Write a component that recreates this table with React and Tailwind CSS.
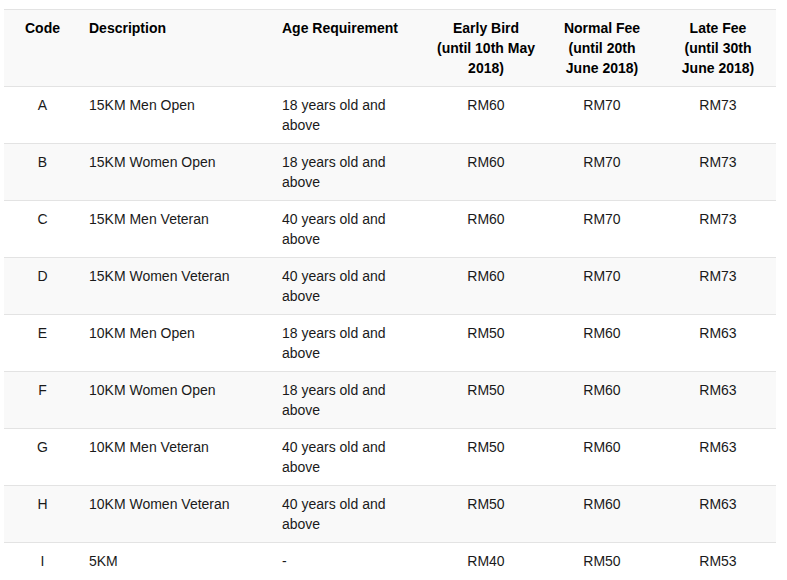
import React from 'react';

const rows = [
  ['A', '15KM Men Open', '18 years old and above', 'RM60', 'RM70', 'RM73'],
  ['B', '15KM Women Open', '18 years old and above', 'RM60', 'RM70', 'RM73'],
  ['C', '15KM Men Veteran', '40 years old and above', 'RM60', 'RM70', 'RM73'],
  ['D', '15KM Women Veteran', '40 years old and above', 'RM60', 'RM70', 'RM73'],
  ['E', '10KM Men Open', '18 years old and above', 'RM50', 'RM60', 'RM63'],
  ['F', '10KM Women Open', '18 years old and above', 'RM50', 'RM60', 'RM63'],
  ['G', '10KM Men Veteran', '40 years old and above', 'RM50', 'RM60', 'RM63'],
  ['H', '10KM Women Veteran', '40 years old and above', 'RM50', 'RM60', 'RM63'],
  ['I', '5KM', '-', 'RM40', 'RM50', 'RM53'],
];

const App = () => {
  return (
    <div className="bg-white w-[787px] h-[580px] overflow-hidden pt-[9px] pl-[4px] font-['Liberation_Sans',Arial,sans-serif] text-[14px] leading-[20px] text-[#1a1a1a]">
      <table className="table-fixed border-collapse w-[772px]">
        <colgroup>
          <col className="w-[77px]" />
          <col className="w-[193px]" />
          <col className="w-[154px]" />
          <col className="w-[116px]" />
          <col className="w-[116px]" />
          <col className="w-[116px]" />
        </colgroup>
        <thead>
          <tr className="bg-[#f9f9f9] border-t border-[#e3e3e3]">
            <th className="px-2 py-2 align-top text-center font-bold text-black">Code</th>
            <th className="px-2 py-2 align-top text-left font-bold text-black">Description</th>
            <th className="px-2 py-2 align-top text-left font-bold text-black">Age Requirement</th>
            <th className="px-2 py-2 align-top text-center font-bold text-black">
              Early Bird<br />(until 10th May<br />2018)
            </th>
            <th className="px-2 py-2 align-top text-center font-bold text-black">
              Normal Fee<br />(until 20th<br />June 2018)
            </th>
            <th className="px-2 py-2 align-top text-center font-bold text-black">
              Late Fee<br />(until 30th<br />June 2018)
            </th>
          </tr>
        </thead>
        <tbody>
          {rows.map((r, i) => (
            <tr
              key={r[0]}
              className={`border-t border-[#e3e3e3] ${i % 2 === 1 ? 'bg-[#f9f9f9]' : 'bg-white'}`}
            >
              <td className="px-2 py-2 align-top text-center">{r[0]}</td>
              <td className="px-2 py-2 align-top">{r[1]}</td>
              <td className="px-2 py-2 align-top">
                <div className="h-[40px]">{r[2]}</div>
              </td>
              <td className="px-2 py-2 align-top text-center">{r[3]}</td>
              <td className="px-2 py-2 align-top text-center">{r[4]}</td>
              <td className="px-2 py-2 align-top text-center">{r[5]}</td>
            </tr>
          ))}
        </tbody>
      </table>
    </div>
  );
};

export default App;
